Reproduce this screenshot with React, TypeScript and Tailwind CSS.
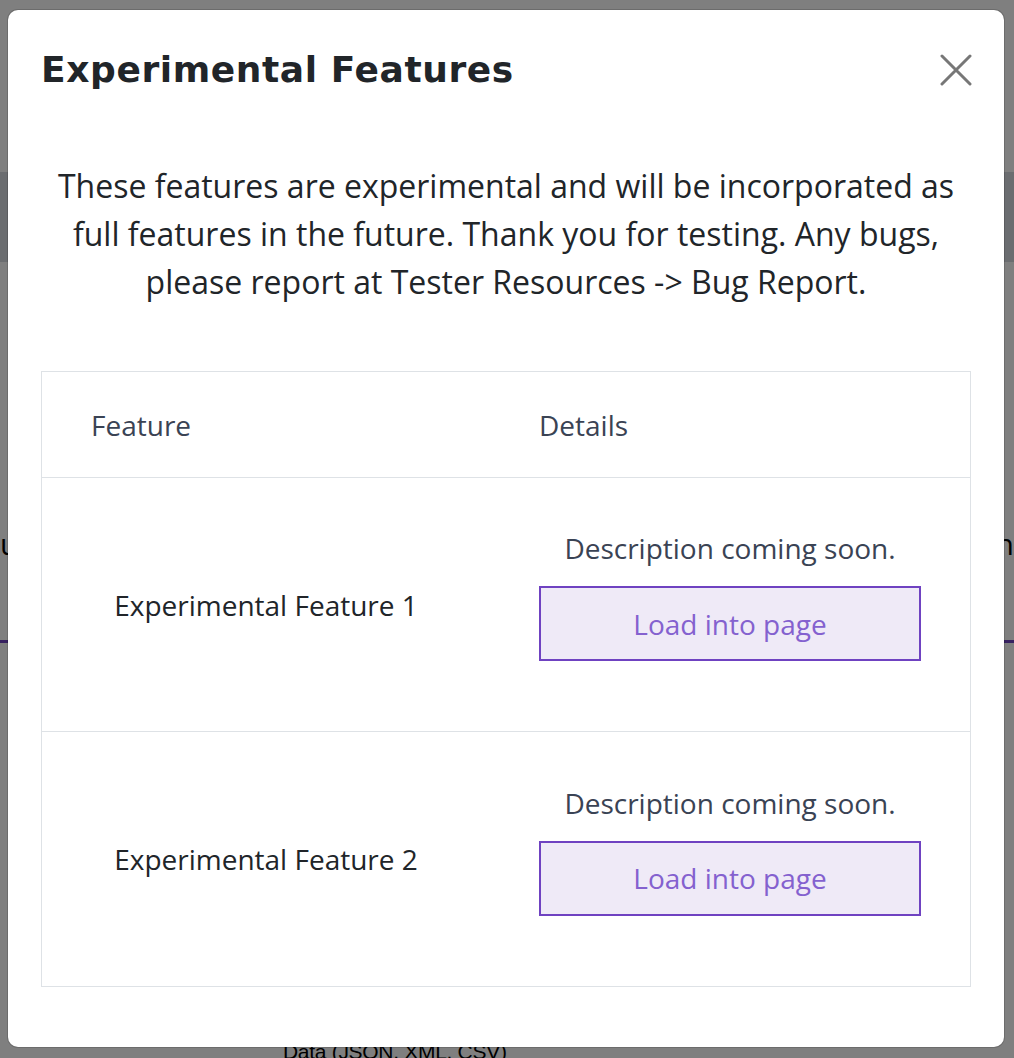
import { useState } from "react";

const features = [
  { name: "Experimental Feature 1", details: "Description coming soon." },
  { name: "Experimental Feature 2", details: "Description coming soon." },
];

function CloseIcon() {
  return (
    <svg viewBox="0 0 32 32" className="w-[32px] h-[32px]" fill="none">
      <path d="M2 2 L30 30 M30 2 L2 30" stroke="#777777" strokeWidth="3" strokeLinecap="round" />
    </svg>
  );
}

export default function App() {
  const [open, setOpen] = useState(true);

  return (
    <div className="relative h-[1058px] bg-white overflow-hidden font-['Open_Sans',sans-serif]">
      {/* page behind the modal */}
      <div className="h-[172px]" />
      <div className="h-[90px] bg-[#d7dbe1]" />
      <div className="h-[262px]" />
      <div className="flex justify-between text-[30px] leading-[40px] text-black">
        <span>u</span>
        <span>n</span>
      </div>
      <div className="h-[76px]" />
      <div className="h-[3px] bg-[#6f42c1]" />
      <div className="h-[395px]" />
      <div className="pl-[283px] text-[21px] leading-[28px] tracking-[-0.3px] text-black font-['Liberation_Sans',sans-serif]">
        Data (JSON, XML, CSV)
      </div>

      {open && (
        <div className="absolute inset-0 bg-black/50 pl-[8px] pt-[10px]">
          <div className="w-[996px] h-[1037px] bg-white rounded-[10px] shadow-[0_0_0_1px_rgba(0,0,0,0.15)] flex flex-col">
            <div className="flex items-center justify-between pl-[33px] pr-[32px] pt-[24px] h-[96px]">
              <h1 className="text-[36px] leading-[44px] font-bold tracking-[0.6px] text-[#212529] font-['DejaVu_Sans',sans-serif]">
                Experimental Features
              </h1>
              <button onClick={() => setOpen(false)} className="flex items-center justify-center">
                <CloseIcon />
              </button>
            </div>

            <p className="mt-[56px] px-[20px] text-center text-[32px] leading-[48px] text-[#212529]">
              These features are experimental and will be incorporated as
              <br />
              full features in the future. Thank you for testing. Any bugs,
              <br />
              please report at Tester Resources -&gt; Bug Report.
            </p>

            <div className="mx-[33px] mt-[65px] border-[1.5px] border-[#dee2e6]">
              <div className="grid grid-cols-[448px_1fr] h-[106px] items-center border-b-[1.5px] border-[#dee2e6] text-[28px] text-[#3a4354]">
                <div className="pl-[49px]">Feature</div>
                <div className="pl-[49px]">Details</div>
              </div>
              {features.map((f, i) => (
                <div
                  key={f.name}
                  className={`grid grid-cols-[448px_1fr] h-[254px] items-center ${i < features.length - 1 ? "border-b-[1.5px] border-[#dee2e6]" : ""}`}
                >
                  <div className="text-center text-[28px] text-[#212529]">{f.name}</div>
                  <div className="flex flex-col items-center pb-[20px]">
                    <div className="text-[28px] leading-[40px] text-[#3a4354]">{f.details}</div>
                    <button className="mt-[18px] w-[382px] h-[75px] border-2 border-[#6f42c1] bg-[#efeaf7] text-[28px] text-[#8461cf]">
                      Load into page
                    </button>
                  </div>
                </div>
              ))}
            </div>
          </div>
        </div>
      )}
    </div>
  );
}
